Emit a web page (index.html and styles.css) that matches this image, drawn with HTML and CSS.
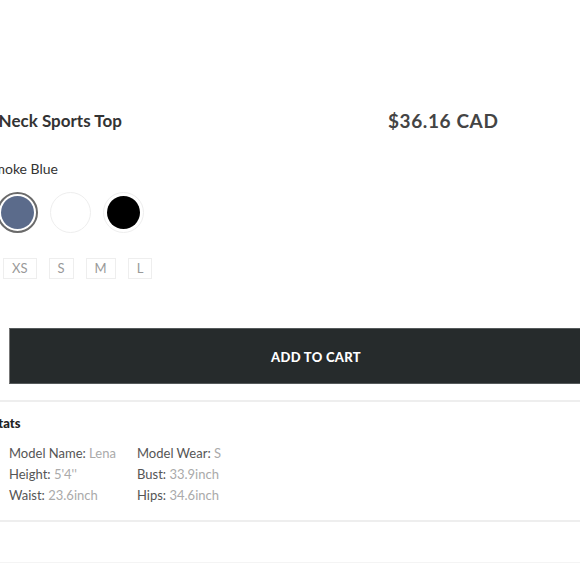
FILE: index.html
```html
<!DOCTYPE html>
<html>
<head>
<meta charset="utf-8">
<link rel="stylesheet" href="styles.css">
</head>
<body>
<div class="product">
  <div class="title-row">
    <h1 class="title">V-Neck Sports Top</h1>
    <div class="price">$36.16 CAD</div>
  </div>
  <div class="color-label">Smoke Blue</div>
  <div class="swatches">
    <span class="swatch swatch-blue is-selected"></span>
    <span class="swatch swatch-white"></span>
    <span class="swatch swatch-black"></span>
  </div>
  <div class="sizes">
    <span class="size">XS</span>
    <span class="size">S</span>
    <span class="size">M</span>
    <span class="size">L</span>
  </div>
  <button class="add-to-cart">ADD TO CART</button>
  <div class="divider"></div>
  <h2 class="stats-title">Model Stats</h2>
  <div class="stats">
    <div class="stat"><span class="stat-label">Model Name:</span> <span class="stat-value">Lena</span></div>
    <div class="stat"><span class="stat-label">Model Wear:</span> <span class="stat-value">S</span></div>
    <div class="stat"><span class="stat-label">Height:</span> <span class="stat-value">5'4''</span></div>
    <div class="stat"><span class="stat-label">Bust:</span> <span class="stat-value">33.9inch</span></div>
    <div class="stat"><span class="stat-label">Waist:</span> <span class="stat-value">23.6inch</span></div>
    <div class="stat"><span class="stat-label">Hips:</span> <span class="stat-value">34.6inch</span></div>
  </div>
  <div class="divider divider-2"></div>
  <div class="divider divider-3"></div>
</div>
</body>
</html>
```

FILE: styles.css
```css
html, body {
  margin: 0;
  padding: 0;
  background: #fff;
  overflow: hidden;
}
body {
  font-family: Lato, "Open Sans", sans-serif;
  color: #333;
}
.product {
  margin-left: -16px;
  width: 700px;
  padding-top: 109px;
}
.title-row {
  display: grid;
  grid-template-columns: 404px auto;
  align-items: center;
  height: 24px;
}
.title {
  margin: 0 0 0 -3px;
  font-size: 17px;
  font-weight: 700;
  line-height: 24px;
  color: #333;
}
.price {
  font-size: 19px;
  font-weight: 700;
  letter-spacing: 0.6px;
  line-height: 24px;
  color: #444;
}
.color-label {
  margin-top: 27px;
  margin-left: 2px;
  font-size: 14px;
  line-height: 18px;
  color: #333;
}
.swatches {
  margin-top: 14px;
  margin-left: 13px;
  display: flex;
  gap: 12px;
}
.swatch {
  box-sizing: border-box;
  width: 41px;
  height: 41px;
  border-radius: 50%;
  border: 1px solid #eee;
  background-clip: content-box;
}
.swatch-blue {
  background-color: #5b6b8b;
}
.swatch-blue.is-selected {
  border: 2px solid #6a6a6a;
  padding: 2px;
}
.swatch-white {
  background-color: #fff;
}
.swatch-black {
  padding: 3px;
  background-color: #000;
}
.sizes {
  margin-top: 25px;
  margin-left: 19px;
  display: flex;
  gap: 12px;
}
.size {
  box-sizing: border-box;
  height: 21px;
  padding: 0 8px;
  border: 1px solid #eee;
  font-size: 13px;
  line-height: 19px;
  color: #999;
}
.add-to-cart {
  display: block;
  margin-top: 49px;
  margin-left: 25px;
  width: 614px;
  height: 56px;
  padding-top: 2px;
  border: 1px solid #555a5b;
  border-left-color: #777;
  background: #262b2c;
  color: #fff;
  font-family: Lato, "Open Sans", sans-serif;
  font-size: 13px;
  font-weight: 900;
  letter-spacing: 0.3px;
}
.divider {
  margin-top: 16px;
  height: 2px;
  background: #eee;
}
.stats-title {
  margin: 12px 0 0 0;
  margin-left: -33px;
  font-size: 13px;
  font-weight: 900;
  line-height: 18px;
  color: #222;
}
.stats {
  margin-top: 11px;
  margin-left: 25px;
  display: grid;
  grid-template-columns: 128px auto;
  font-size: 13px;
  line-height: 21px;
}
.stat-label {
  color: #555;
}
.stat-value {
  color: #aaa;
}
.divider-2 {
  margin-top: 14px;
}
.divider-3 {
  margin-top: 40px;
  height: 1px;
  background: #f4f4f4;
}
```
